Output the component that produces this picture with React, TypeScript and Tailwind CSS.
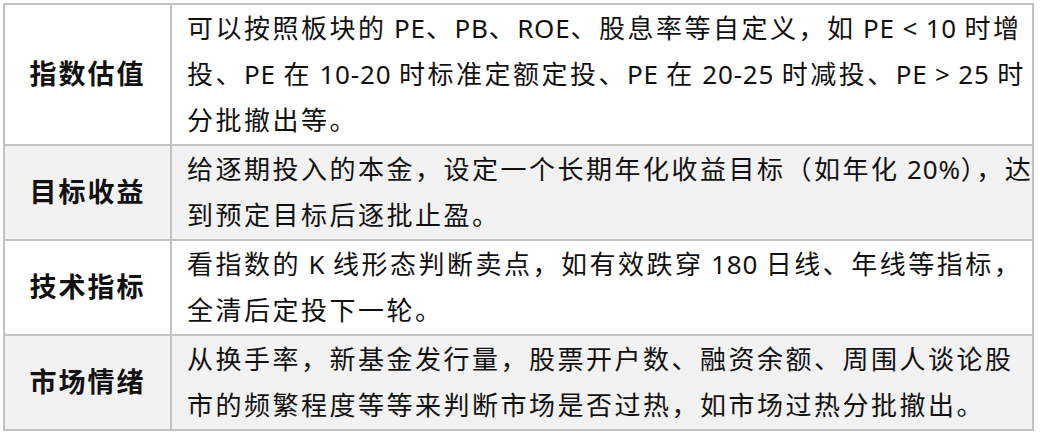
import React from 'react'

type Row = {
    label: string
    lines: string[]
    shaded: boolean
}

const rows: Row[] = [
    {
        label: '指数估值',
        lines: [
            '可以按照板块的 PE、PB、ROE、股息率等自定义，如 PE < 10 时增',
            '投、PE 在 10-20 时标准定额定投、PE 在 20-25 时减投、PE > 25 时',
            '分批撤出等。',
        ],
        shaded: false,
    },
    {
        label: '目标收益',
        lines: ['给逐期投入的本金，设定一个长期年化收益目标（如年化 20%），达', '到预定目标后逐批止盈。'],
        shaded: true,
    },
    {
        label: '技术指标',
        lines: ['看指数的 K 线形态判断卖点，如有效跌穿 180 日线、年线等指标，', '全清后定投下一轮。'],
        shaded: false,
    },
    {
        label: '市场情绪',
        lines: ['从换手率，新基金发行量，股票开户数、融资余额、周围人谈论股', '市的频繁程度等等来判断市场是否过热，如市场过热分批撤出。'],
        shaded: true,
    },
]

// latin runs get tighter spacing, CJK keeps the wide tracking
const Line: React.FC<{ text: string }> = ({ text }) => {
    const parts = text.match(/[\x20-\x7e]+|[^\x20-\x7e]+/g) ?? []
    return (
        <div className="whitespace-pre">
            {parts.map((p, i) =>
                /^[\x20-\x7e]+$/.test(p) ? (
                    <span key={i} className="tracking-[0.8px]">
                        {p}
                    </span>
                ) : (
                    <span key={i}>{p}</span>
                )
            )}
        </div>
    )
}

export default function App() {
    return (
        <div
            className="w-[1040px] h-[436px] bg-white pl-[3px] pt-[3px]"
            style={{ fontFamily: '"Noto Sans", "Noto Sans CJK SC", sans-serif' }}
        >
            <div className="w-[1031px] border-2 border-[#c2c2c2] text-[#111]">
                {rows.map((row, i) => (
                    <div
                        key={row.label}
                        className={`grid grid-cols-[167px_1fr] ${row.shaded ? 'bg-[#f2f2f2]' : 'bg-white'} ${
                            i < rows.length - 1 ? 'border-b-2 border-[#c2c2c2]' : ''
                        }`}
                    >
                        <div className="flex items-center justify-center border-r-2 border-[#c2c2c2] font-bold text-[27px] tracking-[2px]">
                            {row.label}
                        </div>
                        <div className="pl-[15px] pb-[1px] text-[26px] leading-[46px] tracking-[2.5px]">
                            {row.lines.map((l) => (
                                <Line key={l} text={l} />
                            ))}
                        </div>
                    </div>
                ))}
            </div>
        </div>
    )
}
